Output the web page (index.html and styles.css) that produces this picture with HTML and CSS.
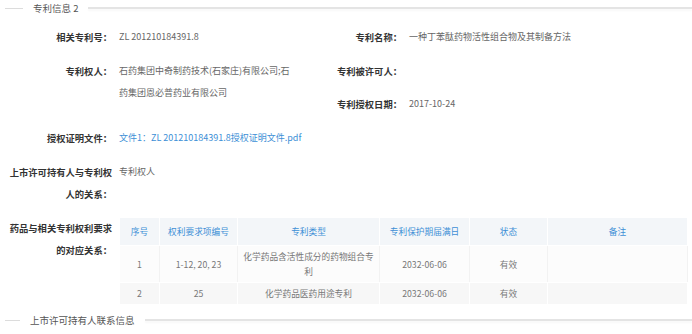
FILE: index.html
```html
<!DOCTYPE html>
<html lang="zh-CN">
<head>
<meta charset="utf-8">
<title>专利信息</title>
<link rel="stylesheet" href="styles.css">
</head>
<body>
<div class="section-title"><span class="line-left"></span><span class="title-text">专利信息 2</span><span class="line-right"></span></div>
<div class="form">
  <div class="row">
    <div class="half first">
      <div class="item"><div class="label">相关专利号：</div><div class="val">ZL 201210184391.8</div></div>
    </div>
    <div class="half">
      <div class="item"><div class="label">专利名称：</div><div class="val">一种丁苯酞药物活性组合物及其制备方法</div></div>
    </div>
  </div>
  <div class="row">
    <div class="half first">
      <div class="item"><div class="label">专利权人：</div><div class="val">石药集团中奇制药技术(石家庄)有限公司;石药集团恩必普药业有限公司</div></div>
    </div>
    <div class="half">
      <div class="item"><div class="label">专利被许可人：</div><div class="val"></div></div>
      <div class="item"><div class="label">专利授权日期：</div><div class="val">2017-10-24</div></div>
    </div>
  </div>
  <div class="row">
    <div class="item"><div class="label">授权证明文件：</div><div class="val"><a class="link" href="#">文件1：ZL 201210184391.8授权证明文件.pdf</a></div></div>
  </div>
  <div class="row">
    <div class="item"><div class="label">上市许可持有人与专利权人的关系：</div><div class="val">专利权人</div></div>
  </div>
  <div class="row last">
    <div class="item"><div class="label">药品与相关专利权利要求的对应关系：</div>
      <div class="val">
        <table class="tbl">
          <colgroup><col class="c1"><col class="c2"><col class="c3"><col class="c4"><col class="c5"><col class="c6"></colgroup>
          <thead><tr><th>序号</th><th>权利要求项编号</th><th>专利类型</th><th>专利保护期届满日</th><th>状态</th><th>备注</th></tr></thead>
          <tbody>
            <tr><td>1</td><td>1-12, 20, 23</td><td>化学药品含活性成分的药物组合专利</td><td>2032-06-06</td><td>有效</td><td></td></tr>
            <tr class="alt"><td>2</td><td>25</td><td>化学药品医药用途专利</td><td>2032-06-06</td><td>有效</td><td></td></tr>
          </tbody>
        </table>
      </div>
    </div>
  </div>
</div>
<div class="section-title bottom"><span class="line-left short"></span><span class="title-text">上市许可持有人联系信息</span><span class="line-right"></span></div>
</body>
</html>
```
FILE: styles.css
```css
html, body {
  margin: 0;
  padding: 0;
  background: #fff;
  font-family: "Noto Sans CJK SC", "Noto Sans", sans-serif;
  color: #666;
  overflow: hidden;
}
.section-title {
  display: flex;
  align-items: center;
  height: 16px;
  padding-left: 5px;
}
.line-left {
  width: 18px;
  height: 1px;
  background: #dcdcdc;
}
.line-left.short { width: 15px; }
.title-text {
  font-size: 9.5px;
  line-height: 16px;
  color: #555;
  margin: 0 10px;
  white-space: nowrap;
}
.line-right {
  flex: 1;
  height: 2px;
  background: #e4e4e4;
  box-shadow: 0 2px 2px rgba(0,0,0,0.03);
}
.section-title.bottom { margin-top: 7px; }
.form {
  padding: 10px 0 0 8px;
}
.row {
  display: flex;
  margin-bottom: 12px;
}
.row.last { margin-bottom: 0; }
.half {
  display: flex;
  flex-direction: column;
  gap: 11px;
  flex: 1;
}
.half.first { flex: 0 0 290px; }
.row > .item { flex: 1; }
.item {
  display: flex;
}
.label {
  width: 104px;
  flex: 0 0 104px;
  text-align: right;
  font-size: 9.3px;
  line-height: 22px;
  font-weight: 700;
  color: #333;
}
.val {
  flex: 1;
  padding-left: 7px;
  padding-right: 4px;
  font-size: 9px;
  line-height: 22px;
  color: #666;
  min-height: 22px;
}
.link {
  color: #3d8fd6;
  text-decoration: none;
}
.tbl {
  border-collapse: collapse;
  table-layout: fixed;
  width: 568px;
  font-size: 8.7px;
  text-align: center;
}
.c1 { width: 40px; }
.c2 { width: 78px; }
.c3 { width: 142px; }
.c4 { width: 90px; }
.c5 { width: 78px; }
.c6 { width: 140px; }
.tbl th {
  height: 27px;
  padding: 0 4px;
  font-weight: 400;
  color: #3d8fd6;
  background: #f3f6f9;
  border: 1px solid #fff;
  line-height: 15px;
}
.tbl td {
  padding: 3px 4px;
  line-height: 15px;
  color: #777;
  background: #fcfcfc;
  border: 1px solid #fff;
  border-right-color: #f2f2f2;
}
.tbl tr.alt td {
  background: #f7f7f7;
  border-right-color: #fff;
}
```
